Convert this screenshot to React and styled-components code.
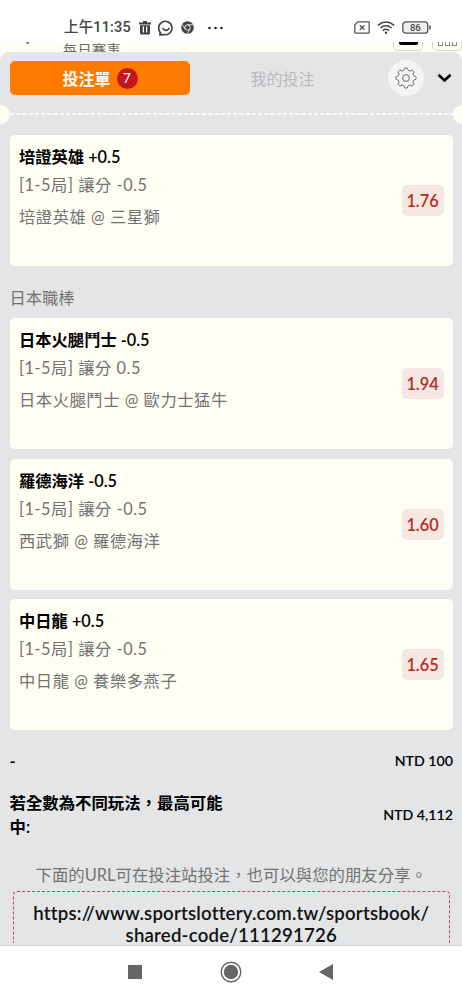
import React from 'react';
import styled, { createGlobalStyle } from 'styled-components';

const colors = {
  cream: '#fffef4',
  panel: '#e3e5e7',
  orange: '#ff7b00',
  red: '#b52a23',
  badge: '#c4161c',
  muted: '#727271',
};

const GlobalStyle = createGlobalStyle`
  * { box-sizing: border-box; }
  body {
    margin: 0;
    background: #fff;
    font-family: Lato, 'Noto Sans CJK TC', sans-serif;
    font-variant-ligatures: none;
  }
`;

const Screen = styled.div`
  width: 462px;
  height: 1000px;
  display: flex;
  flex-direction: column;
  overflow: hidden;
  background: #fff;
`;

const StatusBar = styled.header`
  flex: none;
  height: 42px;
  padding: 13px 31px 0 64px;
  display: flex;
  align-items: center;
  justify-content: space-between;
`;

const StatusGroup = styled.div`
  display: flex;
  align-items: center;
  gap: 7px;
`;

const Clock = styled.span`
  margin-right: 1px;
  font: 500 14.5px/20px Roboto, 'Noto Sans CJK TC', sans-serif;
  letter-spacing: 0.15px;
  white-space: nowrap;
  color: #444;
`;

const Icon = styled.svg`
  display: block;
  flex: none;
`;

const Backdrop = styled.div`
  flex: none;
  height: 10px;
  padding: 0 0 0 26px;
  display: flex;
  overflow: hidden;
  background: ${colors.cream};
`;

const Dot = styled.i`
  width: 3px;
  height: 2px;
  margin-right: 34px;
  border-radius: 1px;
  background: #777;
`;

const BackdropLabel = styled.span`
  height: 10px;
  font-size: 14px;
  line-height: 15px;
  letter-spacing: 0.5px;
  color: #6a6a68;
`;

const BackdropButton = styled.span`
  flex: none;
  width: 30px;
  height: 9px;
  margin-left: ${({ $offset }) => $offset};
  display: flex;
  justify-content: center;
  gap: 2px;
  border: 1px solid #d3d2cb;
  border-top: 0;
  border-radius: 0 0 5px 5px;

  b {
    width: 19px;
    height: 3px;
    border-radius: 0 0 2px 2px;
    background: #000;
  }

  i {
    width: 5px;
    height: 4px;
    border: 1px solid #888;
    border-top: 0;
  }
`;

const Slip = styled.main`
  flex: 1;
  min-height: 0;
  overflow: hidden;
  background: ${colors.cream};
`;

const Panel = styled.div`
  height: 100%;
  padding-bottom: 2px;
  display: flex;
  flex-direction: column;
  overflow: hidden;
  border-radius: 9px 9px 0 0;
  background: ${colors.panel};
`;

const Tabs = styled.nav`
  flex: none;
  height: 52px;
  padding: 0 9.5px;
  display: flex;
  align-items: center;
`;

const Tab = styled.div`
  width: ${({ $active }) => ($active ? 180 : 185)}px;
  height: 34px;
  padding-left: 1px;
  display: flex;
  align-items: center;
  justify-content: center;
  gap: 6px;
  border-radius: 5px;
  font-size: 16px;
  font-weight: ${({ $active }) => ($active ? 700 : 400)};
  color: ${({ $active }) => ($active ? '#fff' : '#b7b8ba')};
  background: ${({ $active }) => ($active ? colors.orange : 'transparent')};
`;

const Count = styled.span`
  width: 21px;
  height: 21px;
  border-radius: 50%;
  font-size: 13.5px;
  font-weight: 400;
  line-height: 21px;
  text-align: center;
  background: ${colors.badge};
`;

const GearButton = styled.div`
  width: 36px;
  height: 36px;
  margin: 0 13px 0 13px;
  display: flex;
  align-items: center;
  justify-content: center;
  border-radius: 50%;
  background: #f4f4f6;
`;

const Perforation = styled.div`
  flex: none;
  height: 20px;
  display: flex;
  align-items: center;
  justify-content: space-between;
`;

const Notch = styled.i`
  width: 9.5px;
  height: 19px;
  border-radius: ${({ $right }) => ($right ? '10px 0 0 10px' : '0 10px 10px 0')};
  background: ${colors.cream};
`;

const Dashes = styled.i`
  flex: 1;
  height: 2.5px;
  background: repeating-linear-gradient(90deg, #fbfbf5 0 4px, transparent 4.5px 6.2px);
`;

const Body = styled.div`
  flex: 1;
  min-height: 0;
  padding: 11px 9px 0 9.5px;
  overflow: hidden;
`;

const Card = styled.section`
  height: 131px;
  margin-bottom: 9.5px;
  padding: 0 9.5px 0 9.500px;
  display: flex;
  align-items: center;
  justify-content: space-between;
  border-radius: 5px;
  background: ${colors.cream};
`;

const Info = styled.div`
  height: 131px;
  padding-top: 10px;
`;

const Pick = styled.h3`
  margin: 0;
  font-size: 16.3px;
  font-weight: 600;
  line-height: 24px;
  color: #000;
`;

const Detail = styled.p`
  margin: ${({ $top }) => $top}px 0 0;
  font-size: 16.3px;
  font-weight: 400;
  line-height: 24px;
  letter-spacing: 0.55px;
  color: ${colors.muted};
`;

const Odds = styled.span`
  width: 42px;
  height: 31px;
  border-radius: 5px;
  font-size: 16.3px;
  font-weight: 600;
  line-height: 31px;
  text-align: center;
  color: ${colors.red};
  background: #f6e7e0;
`;

const League = styled.h2`
  height: 42.5px;
  margin: 0;
  padding-top: 10px;
  font-size: 16.3px;
  font-weight: 400;
  line-height: 24px;
  color: ${colors.muted};
`;

const Total = styled.div`
  height: ${({ $height }) => $height}px;
  display: flex;
  align-items: center;
  justify-content: space-between;
  font-size: 16.4px;
  font-weight: 600;
  line-height: 24px;
  color: #000;

  span { width: 222px; }
  strong {
    font-size: 14.2px;
    font-weight: 600;
  }
`;

const Hint = styled.p`
  margin: 14px 0 4px;
  font-size: 16.4px;
  font-weight: 400;
  line-height: 24px;
  text-align: center;
  white-space: nowrap;
  color: ${colors.muted};
`;

const Share = styled.div`
  height: 70px;
  margin: 0 3px;
  padding-top: 10px;
  border: 1px dashed #c8424f;
  border-radius: 4px;
  font-size: 18.6px;
  font-weight: 600;
  line-height: 22px;
  letter-spacing: 0.2px;
  text-align: center;
  color: #111;
`;

const NavBar = styled.footer`
  flex: none;
  height: 55px;
  padding: 0 129px 2px 128px;
  display: flex;
  align-items: center;
  justify-content: space-between;
  border-top: 1px solid #d5d6d7;
  background: #fff;
`;

const koreanBets = [
  { pick: '培證英雄 +0.5', line: '[1-5局] 讓分 -0.5', match: '培證英雄 @ 三星獅', odds: '1.76' },
];

const japanBets = [
  { pick: '日本火腿鬥士 -0.5', line: '[1-5局] 讓分 0.5', match: '日本火腿鬥士 @ 歐力士猛牛', odds: '1.94' },
  { pick: '羅德海洋 -0.5', line: '[1-5局] 讓分 -0.5', match: '西武獅 @ 羅德海洋', odds: '1.60' },
  { pick: '中日龍 +0.5', line: '[1-5局] 讓分 -0.5', match: '中日龍 @ 養樂多燕子', odds: '1.65' },
];

const gearPath = () => {
  const points = [];
  const teeth = 8;
  for (let i = 0; i < teeth * 12; i += 1) {
    const a = (i / (teeth * 12)) * Math.PI * 2;
    const wave = Math.max(-1, Math.min(1, Math.cos(a * teeth) * 1.7));
    const r = 9 + wave * 1.1;
    points.push(`${(11 + r * Math.sin(a)).toFixed(2)} ${(11 - r * Math.cos(a)).toFixed(2)}`);
  }
  return `M${points.join('L')}Z`;
};

const Bet = ({ pick, line, match, odds }) => (
  <Card>
    <Info>
      <Pick>{pick}</Pick>
      <Detail $top={4}>{line}</Detail>
      <Detail $top={8}>{match}</Detail>
    </Info>
    <Odds>{odds}</Odds>
  </Card>
);

const Status = () => (
  <StatusBar>
    <StatusGroup>
      <Clock>上午11:35</Clock>
      <Icon width="12" height="14" viewBox="0 0 12 14" fill="#414141">
        <path d="M4 0h4v1.5h4v2H0v-2h4zM1 4.3h10V12q0 1.5-1.5 1.5h-7Q1 13.5 1 12zM3.7 5.5v6H5v-6zM7 5.500v6h1.300v-6z" fillRule="evenodd" />
      </Icon>
      <Icon width="16" height="16" viewBox="0 0 16 16" fill="none" stroke="#414141" strokeWidth="1.6">
        <path d="M3.200 13.300A6.700 6.700 0 1 1 6 14.600L1.800 14.900 2.300 11.800" strokeLinejoin="round" />
        <path d="M5 8.500q3 3.800 6 0" strokeLinecap="round" />
      </Icon>
      <Icon width="13" height="13" viewBox="0 0 13 13">
        <circle cx="6.5" cy="6.5" r="6.3" fill="#414141" />
        <circle cx="6.5" cy="6.5" r="2.7" fill="#414141" stroke="#fff" strokeWidth="0.9" />
        <path d="M6.5 3.8H12M4.2 8 1.300 3.500M8.900 8 6.200 12.700" stroke="#fff" strokeWidth="0.8" />
      </Icon>
      <Icon width="24" height="4" viewBox="0 0 24 4" fill="#222">
        <circle cx="8.5" cy="2" r="1.3" />
        <circle cx="14.5" cy="2" r="1.3" />
        <circle cx="20.5" cy="2" r="1.3" />
      </Icon>
    </StatusGroup>
    <StatusGroup>
      <Icon width="16" height="13" viewBox="0 0 16 13" fill="none" stroke="#555" strokeWidth="1.3">
        <path d="M3.500.8H14.400q.8 0 .8.800v9.800q0 .8-.8.800H1.600q-.8 0-.8-.8V4z" />
        <path d="m5.800 4.200 4.600 4.600m0-4.600L5.800 8.800" />
      </Icon>
      <Icon width="18" height="13" viewBox="0 0 18 13" fill="none" stroke="#444" strokeWidth="1.5">
        <path d="M.8 4.300q8.200-6.600 16.400 0M3.300 7q5.700-4.600 11.400 0M5.800 9.600q3.200-2.500 6.400 0" />
        <circle cx="9" cy="11.700" r="1.200" fill="#444" stroke="none" />
      </Icon>
      <Icon width="29" height="13" viewBox="0 0 29 13">
        <rect x=".8" y=".8" width="25" height="11.4" rx="3" fill="#eee" stroke="#555" strokeWidth="1.3" />
        <path d="M28 4.500v4" stroke="#555" strokeWidth="1.500" />
        <text x="13.3" y="10" textAnchor="middle" fontSize="9.5" fontWeight="500" fontFamily="Roboto, sans-serif" fill="#444">86</text>
      </Icon>
    </StatusGroup>
  </StatusBar>
);

export default function App() {
  return (
    <Screen>
      <GlobalStyle />
      <Status />
      <Backdrop>
        <Dot />
        <BackdropLabel>每日賽事</BackdropLabel>
        <BackdropButton $offset="auto"><b /></BackdropButton>
        <BackdropButton $offset="9px"><i /><i /><i /></BackdropButton>
      </Backdrop>
      <Slip>
        <Panel>
          <Tabs>
            <Tab $active>投注單<Count>7</Count></Tab>
            <Tab>我的投注</Tab>
            <GearButton>
              <Icon width="22" height="22" viewBox="0 0 22 22" fill="none" stroke="#666" strokeWidth="1">
                <path d={gearPath()} strokeLinejoin="round" />
                <circle cx="11" cy="11" r="3.4" />
              </Icon>
            </GearButton>
            <Icon width="15" height="10" viewBox="0 0 15 10" fill="none" stroke="#000" strokeWidth="2.6">
              <path d="m1.500 1.700 6 5.800 6-5.800" />
            </Icon>
          </Tabs>
          <Perforation>
            <Notch />
            <Dashes />
            <Notch $right />
          </Perforation>
          <Body>
            {koreanBets.map(bet => <Bet key={bet.pick} {...bet} />)}
            <League>日本職棒</League>
            {japanBets.map(bet => <Bet key={bet.pick} {...bet} />)}
            <Total $height={42}><span>-</span><strong>NTD 100</strong></Total>
            <Total $height={67}><span>若全數為不同玩法，最高可能中:</span><strong>NTD 4,112</strong></Total>
            <Hint>下面的URL可在投注站投注，也可以與您的朋友分享。</Hint>
            <Share>https://www.sportslottery.com.tw/sportsbook/<br />shared-code/111291726</Share>
          </Body>
        </Panel>
      </Slip>
      <NavBar>
        <Icon width="14" height="14" viewBox="0 0 14 14"><rect width="14" height="14" fill="#666" /></Icon>
        <Icon width="22" height="22" viewBox="0 0 22 22">
          <circle cx="11" cy="11" r="9.8" fill="none" stroke="#666" strokeWidth="1.4" />
          <circle cx="11" cy="11" r="7.2" fill="#666" />
        </Icon>
        <Icon width="14" height="16" viewBox="0 0 14 16"><path d="M14 0v16L0 8z" fill="#666" /></Icon>
      </NavBar>
    </Screen>
  );
}
